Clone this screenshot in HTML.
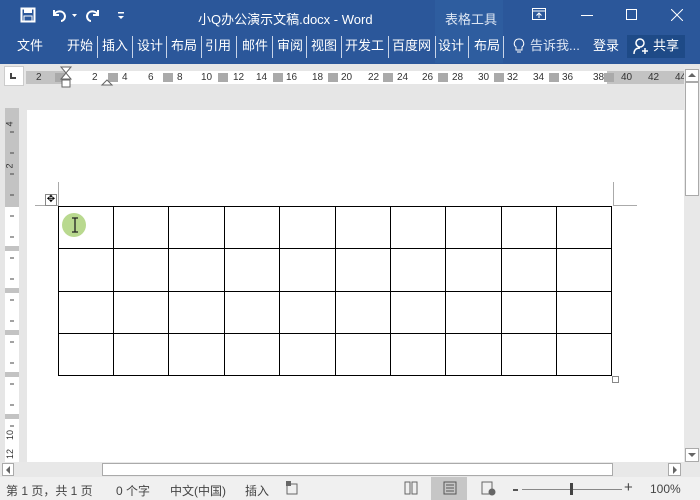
<!DOCTYPE html>
<html><head><meta charset="utf-8"><style>
*{margin:0;padding:0;box-sizing:border-box}
body{width:700px;height:500px;overflow:hidden;background:#e6e6e6;font-family:"Liberation Sans","Noto Sans CJK SC",sans-serif;position:relative}
.a{position:absolute}
.w{color:#fff;font-size:13px}
.tab{position:absolute;top:38px;color:#fff;font-size:13px;line-height:16px}
.sep{position:absolute;top:36px;width:1px;height:22px;background:#c8d4e8}
.rn{position:absolute;top:71px;font-size:10px;color:#333;line-height:13px}
.st{position:absolute;top:482px;font-size:12px;color:#444}
</style></head><body>
<div class="a" style="left:0;top:0;width:700px;height:64px;background:#2b579a"></div>
<div class="a" style="left:435px;top:0;width:68px;height:63px;background:#2e5d9f"></div>
<!-- QAT -->
<svg class="a" style="left:20px;top:7px" width="16" height="16"><rect x="1.5" y="1.5" width="13" height="13" fill="none" stroke="#fff" stroke-width="2"/><rect x="4" y="2" width="8" height="4" fill="#fff"/><rect x="4" y="9" width="8" height="5" fill="#2b579a" stroke="#fff"/></svg>
<svg class="a" style="left:51px;top:7px" width="30" height="16"><path d="M3 3v5h5 M3 8c2-5 10-5 11 1 0 3-2 5-4 5" fill="none" stroke="#fff" stroke-width="2"/><path d="M21 7h5l-2.5 3z" fill="#fff"/></svg>
<svg class="a" style="left:85px;top:7px" width="16" height="16"><path d="M13 3v5h-5 M13 8c-2-5-10-5-11 1 0 3 2 5 4 5" fill="none" stroke="#fff" stroke-width="2"/></svg>
<svg class="a" style="left:117px;top:11px" width="8" height="10"><rect x="1" y="1" width="6" height="1.5" fill="#fff"/><path d="M1 5h6l-3 3z" fill="#fff"/></svg>
<div class="a w" style="left:198px;top:9px">小Q办公演示文稿.docx - Word</div>
<div class="a" style="left:445px;top:9px;color:#dde6f3;font-size:13px">表格工具</div>
<svg class="a" style="left:532px;top:8px" width="14" height="12"><rect x="0.5" y="0.5" width="13" height="11" fill="none" stroke="#fff"/><line x1="0.5" y1="3" x2="13.5" y2="3" stroke="#fff"/><path d="M7 10V5M4.5 7.5L7 5l2.5 2.5" stroke="#fff" fill="none"/></svg>
<div class="a" style="left:581px;top:15px;width:12px;height:1px;background:#fff"></div>
<div class="a" style="left:626px;top:9px;width:11px;height:11px;border:1px solid #fff"></div>
<svg class="a" style="left:671px;top:9px" width="12" height="12"><path d="M0 0L12 12M12 0L0 12" stroke="#fff"/></svg>
<!-- tabs -->
<div class="tab" style="left:17px">文件</div>
<div class="tab" style="left:67px">开始</div><div class="sep" style="left:97px"></div>
<div class="tab" style="left:102px">插入</div><div class="sep" style="left:132px"></div>
<div class="tab" style="left:137px">设计</div><div class="sep" style="left:166px"></div>
<div class="tab" style="left:171px">布局</div><div class="sep" style="left:201px"></div>
<div class="tab" style="left:205px">引用</div><div class="sep" style="left:236px"></div>
<div class="tab" style="left:242px">邮件</div><div class="sep" style="left:272px"></div>
<div class="tab" style="left:277px">审阅</div><div class="sep" style="left:306px"></div>
<div class="tab" style="left:311px">视图</div><div class="sep" style="left:341px"></div>
<div class="tab" style="left:345px">开发工</div><div class="sep" style="left:388px"></div>
<div class="tab" style="left:392px">百度网</div><div class="sep" style="left:435px"></div>
<div class="tab" style="left:438px">设计</div><div class="sep" style="left:468px"></div>
<div class="tab" style="left:474px">布局</div><div class="sep" style="left:503px"></div>
<svg class="a" style="left:513px;top:38px" width="12" height="16"><path d="M6 1a4.5 4.5 0 0 0-3 8v3h6v-3a4.5 4.5 0 0 0-3-8zM4 14h4" fill="none" stroke="#fff"/></svg>
<div class="tab" style="left:530px;color:#dde6f3">告诉我...</div>
<div class="tab" style="left:593px">登录</div>
<div class="a" style="left:627px;top:35px;width:58px;height:23px;background:#1e4a87"></div>
<svg class="a" style="left:633px;top:38px" width="16" height="17"><circle cx="7" cy="5" r="4" fill="none" stroke="#fff" stroke-width="1.5"/><path d="M1 16c0-5 3-6 6-6M9 13h6M12 10v6" stroke="#fff" stroke-width="1.5" fill="none"/></svg>
<div class="tab" style="left:653px">共享</div>
<!-- ruler -->
<div class="a" style="left:4px;top:66px;width:20px;height:20px;background:#fff;border:1px solid #ccc"></div>
<div class="a" style="left:10px;top:73px;width:6px;height:6px;border-left:2px solid #444;border-bottom:2px solid #444"></div>
<div class="a" style="left:26px;top:71px;width:658px;height:13px;background:#fff"></div>
<div class="a" style="left:26px;top:71px;width:40px;height:13px;background:#c3c3c3"></div>
<div class="a" style="left:607px;top:71px;width:77px;height:13px;background:#c3c3c3"></div>
<div class="rn" style="left:36px">2</div><div class="rn" style="left:92px">2</div><div class="rn" style="left:122px">4</div><div class="rn" style="left:148px">6</div><div class="rn" style="left:177px">8</div>
<div class="rn" style="left:201px">10</div><div class="rn" style="left:233px">12</div><div class="rn" style="left:256px">14</div><div class="rn" style="left:286px">16</div><div class="rn" style="left:312px">18</div><div class="rn" style="left:341px">20</div><div class="rn" style="left:368px">22</div><div class="rn" style="left:397px">24</div><div class="rn" style="left:422px">26</div><div class="rn" style="left:452px">28</div><div class="rn" style="left:478px">30</div><div class="rn" style="left:507px">32</div><div class="rn" style="left:533px">34</div><div class="rn" style="left:562px">36</div><div class="rn" style="left:593px">38</div><div class="rn" style="left:621px">40</div><div class="rn" style="left:648px">42</div><div class="rn" style="left:675px">44</div>
<svg class="a" style="left:0;top:71px" width="700" height="13"><g fill="#aaa"><rect x="55" y="2" width="10" height="9"/><rect x="108" y="2" width="10" height="9"/><rect x="163" y="2" width="10" height="9"/><rect x="218" y="2" width="10" height="9"/><rect x="273" y="2" width="10" height="9"/><rect x="328" y="2" width="10" height="9"/><rect x="383" y="2" width="10" height="9"/><rect x="438" y="2" width="10" height="9"/><rect x="494" y="2" width="10" height="9"/><rect x="549" y="2" width="10" height="9"/><rect x="604" y="2" width="10" height="9"/></g></svg>
<svg class="a" style="left:60px;top:66px" width="54" height="26"><path d="M1 1h10L6 7z M1 13h10L6 7z" fill="#fff" stroke="#666"/><rect x="2" y="14" width="8" height="7" fill="#fff" stroke="#666"/><path d="M42 19l5-5 5 5z" fill="#fff" stroke="#666"/></svg>
<!-- scrollbar vertical -->
<div class="a" style="left:684px;top:66px;width:16px;height:396px;background:#e8e8e8"></div>
<div class="a" style="left:685px;top:69px;width:14px;height:13px;background:#fff;border:1px solid #aaa"></div>
<svg class="a" style="left:688px;top:72px" width="8" height="6"><path d="M0 5l4-4 4 4z" fill="#666"/></svg>
<div class="a" style="left:685px;top:82px;width:14px;height:114px;background:#fff;border:1px solid #aaa"></div>
<div class="a" style="left:685px;top:448px;width:14px;height:14px;background:#fff;border:1px solid #aaa"></div>
<svg class="a" style="left:688px;top:452px" width="8" height="6"><path d="M0 1l4 4 4-4z" fill="#666"/></svg>
<!-- page -->
<div class="a" style="left:27px;top:110px;width:657px;height:352px;background:#fff"></div>
<!-- vertical ruler -->
<div class="a" style="left:5px;top:108px;width:14px;height:354px;background:#fff"></div>
<div class="a" style="left:5px;top:108px;width:14px;height:99px;background:#c3c3c3"></div>
<div class="a" style="left:5px;top:246px;width:14px;height:5px;background:#c3c3c3"></div>
<div class="a" style="left:5px;top:288px;width:14px;height:5px;background:#c3c3c3"></div>
<div class="a" style="left:5px;top:330px;width:14px;height:5px;background:#c3c3c3"></div>
<div class="a" style="left:5px;top:372px;width:14px;height:5px;background:#c3c3c3"></div>
<div class="a" style="left:5px;top:414px;width:14px;height:5px;background:#c3c3c3"></div>
<div class="a" style="left:7px;top:119px;font-size:9px;transform:rotate(-90deg);color:#333">4</div>
<div class="a" style="left:7px;top:161px;font-size:9px;transform:rotate(-90deg);color:#333">2</div>
<div class="a" style="left:5px;top:430px;font-size:9px;transform:rotate(-90deg);color:#333">10</div>
<div class="a" style="left:5px;top:449px;font-size:9px;transform:rotate(-90deg);color:#333">12</div>
<svg class="a" style="left:5px;top:108px" width="14" height="354"><g stroke="#444"><path d="M5 24h4M5 45h4M5 66h4M5 87h4M5 108h4M5 129h4M5 150h4M5 171h4M5 192h4M5 213h4M5 234h4M5 255h4M5 276h4M5 297h4M5 318h4"/></g></svg>
<!-- corner marks -->
<div class="a" style="left:35px;top:205px;width:24px;height:1px;background:#aaa"></div>
<div class="a" style="left:58px;top:182px;width:1px;height:24px;background:#aaa"></div>
<div class="a" style="left:613px;top:205px;width:24px;height:1px;background:#aaa"></div>
<div class="a" style="left:613px;top:182px;width:1px;height:24px;background:#aaa"></div>
<div class="a" style="left:45px;top:194px;width:12px;height:12px;border:1px solid #888;background:#fff;font-size:10px;line-height:10px;text-align:center">✥</div>
<!-- table -->
<svg class="a" style="left:0;top:0" width="700" height="500"><g stroke="#000" stroke-width="1" fill="none" shape-rendering="crispEdges">
<rect x="58.5" y="206.5" width="553" height="169"/>
<path d="M58 248.5h554M58 291.5h554M58 333.5h554"/>
<path d="M113.5 206v170M168.5 206v170M224.5 206v170M279.5 206v170M335.5 206v170M390.5 206v170M445.5 206v170M501.5 206v170M556.5 206v170"/></g>
<rect x="612.5" y="376.5" width="6" height="6" fill="#fff" stroke="#888"/>
<circle cx="74" cy="225" r="12" fill="#b9d98f"/><path d="M72 218h6M75 218v14M72 232h6" stroke="#222" stroke-width="1.3"/></svg>
<!-- horizontal scrollbar -->
<div class="a" style="left:0;top:462px;width:700px;height:15px;background:#e8e8e8"></div>
<div class="a" style="left:2px;top:463px;width:12px;height:13px;background:#fff;border:1px solid #aaa"></div>
<div class="a" style="left:102px;top:463px;width:511px;height:13px;background:#fff;border:1px solid #aaa"></div>
<div class="a" style="left:668px;top:463px;width:13px;height:13px;background:#fff;border:1px solid #aaa"></div>
<svg class="a" style="left:5px;top:466px" width="6" height="8"><path d="M5 0L1 4l4 4z" fill="#666"/></svg>
<svg class="a" style="left:672px;top:466px" width="6" height="8"><path d="M1 0l4 4-4 4z" fill="#666"/></svg>
<!-- status -->
<div class="a" style="left:0;top:477px;width:700px;height:23px;background:#f0f0f0"></div>
<div class="st" style="left:6px">第 1 页，共 1 页</div>
<div class="st" style="left:116px">0 个字</div>
<div class="st" style="left:170px">中文(中国)</div>
<div class="st" style="left:245px">插入</div>
<svg class="a" style="left:286px;top:481px" width="12" height="14"><rect x="1" y="3" width="10" height="10" fill="none" stroke="#666"/><rect x="0" y="0" width="5" height="5" fill="#666"/></svg>
<svg class="a" style="left:404px;top:481px" width="14" height="14"><path d="M1 1h5v12H1zM8 1h5v12H8z" fill="none" stroke="#666"/></svg>
<div class="a" style="left:431px;top:477px;width:36px;height:23px;background:#c6c6c6"></div>
<svg class="a" style="left:443px;top:481px" width="14" height="14"><rect x="1" y="1" width="12" height="12" fill="none" stroke="#555"/><path d="M3 4h8M3 7h8M3 10h8" stroke="#555"/></svg>
<svg class="a" style="left:481px;top:481px" width="15" height="15"><rect x="1" y="1" width="10" height="12" fill="none" stroke="#666"/><circle cx="11" cy="11" r="3.5" fill="#666"/></svg>
<div class="a" style="left:513px;top:489px;width:5px;height:2px;background:#555"></div>
<div class="a" style="left:522px;top:489px;width:100px;height:1px;background:#888"></div>
<div class="a" style="left:570px;top:483px;width:3px;height:12px;background:#444"></div>
<div class="st" style="left:624px;top:479px;font-size:15px">+</div>
<div class="st" style="left:650px">100%</div>
</body></html>
